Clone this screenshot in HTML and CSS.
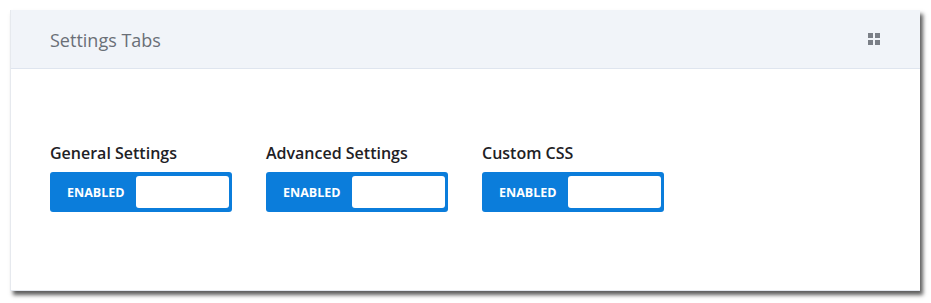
FILE: index.html
```html
<!DOCTYPE html>
<html>
<head>
<meta charset="utf-8">
<link rel="stylesheet" href="styles.css">
</head>
<body>
<div class="panel">
  <div class="panel-head">
    <h2 class="title">Settings Tabs</h2>
    <span class="grid-icon"><i></i><i></i><i></i><i></i></span>
  </div>
  <div class="panel-body">
    <div class="field">
      <div class="label">General Settings</div>
      <div class="toggle"><span class="state">ENABLED</span><span class="knob"></span></div>
    </div>
    <div class="field">
      <div class="label">Advanced Settings</div>
      <div class="toggle"><span class="state">ENABLED</span><span class="knob"></span></div>
    </div>
    <div class="field">
      <div class="label">Custom CSS</div>
      <div class="toggle"><span class="state">ENABLED</span><span class="knob"></span></div>
    </div>
  </div>
</div>
</body>
</html>
```
FILE: styles.css
```css
html, body { margin: 0; padding: 0; background: #ffffff; }
body {
  padding: 10px 0 0 10px;
  height: 303px;
  box-sizing: border-box;
  overflow: hidden;
  font-family: "Open Sans", "Liberation Sans", sans-serif;
}
.panel {
  width: 910px;
  height: 281px;
  background: #fff;
  border-left: 1px solid #e6e9ee;
  border-bottom: 1px solid #e3e7ee;
  box-sizing: border-box;
  box-shadow: 3px 4px 4px rgba(40, 40, 40, 0.75);
}
.panel-head {
  height: 59px;
  box-sizing: border-box;
  background: #f1f4f9;
  border-bottom: 1px solid #dfe5ef;
  display: flex;
  align-items: center;
  justify-content: space-between;
  padding: 0 40px 0 39px;
}
.title {
  margin: 0;
  font-size: 18px;
  font-weight: 400;
  color: #6a6f77;
  line-height: 20px;
  position: relative;
  top: 1px;
}
.grid-icon {
  display: grid;
  grid-template-columns: 5px 5px;
  grid-template-rows: 5px 5px;
  gap: 2px;
}
.grid-icon i { display: block; background: #7b7f87; }
.panel-body {
  display: flex;
  gap: 34px;
  padding: 74px 0 0 39px;
}
.field { width: 182px; }
.label {
  font-size: 16px;
  font-weight: 600;
  color: #1e2125;
  line-height: 20px;
  margin-bottom: 9px;
}
.toggle {
  height: 40px;
  box-sizing: border-box;
  background: #0b7ddb;
  border-radius: 3px;
  display: flex;
  align-items: center;
  padding: 4px 3px 4px 17px;
}
.state {
  color: #fff;
  font-size: 12.5px;
  font-weight: 700;
  width: 69px;
}
.knob {
  flex: 1;
  align-self: stretch;
  background: #fff;
  border-radius: 3px;
}
```
